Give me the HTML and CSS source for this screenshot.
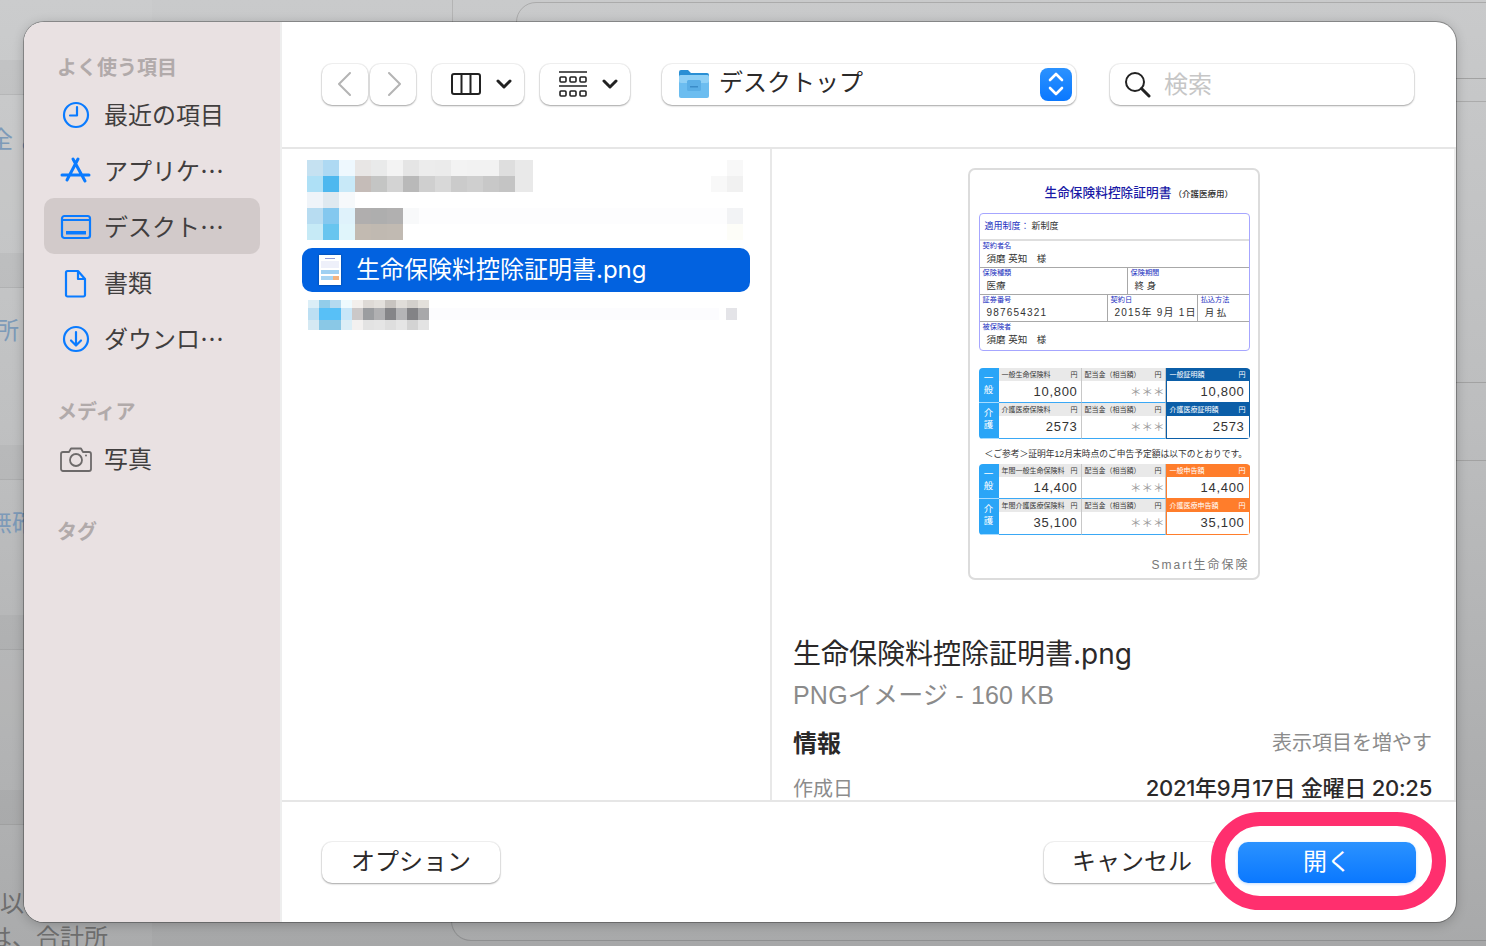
FILE: index.html
```html
<!DOCTYPE html>
<html lang="ja">
<head>
    <meta charset="UTF-8">
    <title>ファイルを開く</title>
    <link rel="stylesheet" href="styles.css">
</head>
<body>
<div class="screen">
    <!-- page behind the sheet -->
    <div class="back-col"></div>
    <div class="back-top"></div>
    <div class="back-window"></div>
    <div class="back-lower"></div>
    <div class="back-band band-1"></div>
    <div class="back-band band-2"></div>
    <div class="back-band band-3"></div>
    <div class="back-band band-4"></div>
    <div class="back-band band-5"></div>
    <div class="back-line line-1"></div>
    <div class="back-line line-2"></div>
    <div class="back-line line-3"></div>
    <span class="back-text text-1">全 よ</span>
    <span class="back-text text-2">所</span>
    <span class="back-text text-3">無確</span>
    <span class="back-text text-4">以</span>
    <span class="back-text text-5">は、合計所</span>

    <div class="dialog">
        <aside class="sidebar">
            <div class="side-head">よく使う項目</div>
            <div class="side-item">
                <svg class="side-icon" viewBox="0 0 32 32"><circle cx="16" cy="16" r="12"/><path d="M17 8v8.500h-7"/></svg>
                <span>最近の項目</span>
            </div>
            <div class="side-item">
                <svg class="side-icon" viewBox="0 0 32 32"><path class="thick" d="M13 4l12 22M18 4L7 25M2 20h27"/></svg>
                <span>アプリケ…</span>
            </div>
            <div class="side-item selected">
                <svg class="side-icon" viewBox="0 0 32 32"><rect x="2" y="5" width="28" height="22" rx="2.500"/><path d="M2 9h28"/><rect class="solid" x="6" y="20" width="20" height="3.500"/></svg>
                <span>デスクト…</span>
            </div>
            <div class="side-item">
                <svg class="side-icon" viewBox="0 0 32 32"><path d="M7.500 4H18l7 8v16a1.500 1.500 0 0 1-1.500 1.500h-16A1.500 1.500 0 0 1 6 28V5.500A1.500 1.500 0 0 1 7.500 4zM18 4v8h7"/></svg>
                <span>書類</span>
            </div>
            <div class="side-item">
                <svg class="side-icon" viewBox="0 0 32 32"><circle cx="16" cy="16" r="12"/><path d="M16 9v13M11 17.500l5 5 5-5"/></svg>
                <span>ダウンロ…</span>
            </div>
            <div class="side-head second">メディア</div>
            <div class="side-item">
                <svg class="side-icon gray" viewBox="0 0 32 32"><path d="M3 9h6l2-3.500h10L23 9h6a2 2 0 0 1 2 2v15a2 2 0 0 1-2 2H3a2 2 0 0 1-2-2V11a2 2 0 0 1 2-2z"/><circle cx="16" cy="17" r="6"/><circle class="solid" cx="26" cy="12.500" r="1"/></svg>
                <span>写真</span>
            </div>
            <div class="side-head second">タグ</div>
        </aside>

        <div class="content">
            <div class="toolbar">
                <div class="nav-group">
                    <button class="tool-btn nav-btn back"><svg width="14" height="24" viewBox="0 0 14 24"><path d="M13 1L2 12l11 11"/></svg></button>
                    <button class="tool-btn nav-btn fwd"><svg width="14" height="24" viewBox="0 0 14 24"><path d="M1 1l11 11L1 23"/></svg></button>
                </div>
                <button class="tool-btn view-btn">
                    <svg class="dark" width="32" height="24" viewBox="0 0 32 24"><rect x="2" y="2" width="28" height="20" rx="2"/><path d="M11.500 2v20M20.500 2v20"/></svg>
                    <svg class="chev" width="16" height="10" viewBox="0 0 16 10"><path d="M2 2l6 6 6-6"/></svg>
                </button>
                <button class="tool-btn group-btn">
                    <svg class="dark thin" width="28" height="27" viewBox="0 0 28 27"><path d="M0 1h28M0 15h28"/><rect x="1" y="6" width="6" height="5" rx="1"/><rect x="11" y="6" width="6" height="5" rx="1"/><rect x="21" y="6" width="6" height="5" rx="1"/><rect x="1" y="20" width="6" height="5" rx="1"/><rect x="11" y="20" width="6" height="5" rx="1"/><rect x="21" y="20" width="6" height="5" rx="1"/></svg>
                    <svg class="chev" width="16" height="10" viewBox="0 0 16 10"><path d="M2 2l6 6 6-6"/></svg>
                </button>
                <div class="tool-btn path-btn">
                    <svg class="folder" width="30" height="28" viewBox="0 0 30 28">
                        <path fill="#2a8fd4" d="M0 2a2 2 0 0 1 2-2h7l3 3h16a2 2 0 0 1 2 2v6H0z"/>
                        <rect fill="#6cbdf0" y="5" width="30" height="23" rx="2"/>
                        <rect fill="#8fd0f6" y="5" width="30" height="8" rx="2"/>
                        <rect fill="#5aaee6" x="8" y="10" width="14" height="11" rx="1.500"/>
                        <rect fill="#3b8cc8" x="11" y="16" width="8" height="1.500"/>
                    </svg>
                    <span class="path-name">デスクトップ</span>
                    <span class="stepper">
                        <svg width="18" height="26" viewBox="0 0 18 26"><path d="M3 9l6-6 6 6M3 17l6 6 6-6"/></svg>
                    </span>
                </div>
                <div class="tool-btn search-box">
                    <svg class="dark" width="27" height="27" viewBox="0 0 27 27"><circle cx="11" cy="11" r="9"/><path class="thick" d="M17.500 17.500l7.500 7.500"/></svg>
                    <span class="placeholder">検索</span>
                </div>
            </div>

            <div class="browser">
                <div class="file-list">
                    <svg class="mosaic" width="436" height="80" shape-rendering="crispEdges">
                        <rect x="0" y="0" width="16" height="16" fill="#c5e1f1"/><rect x="16" y="0" width="16" height="16" fill="#aed9f3"/><rect x="32" y="0" width="16" height="16" fill="#eef8fe"/><rect x="48" y="0" width="16" height="16" fill="#e8e6e5"/><rect x="64" y="0" width="16" height="16" fill="#e9eaea"/><rect x="80" y="0" width="16" height="16" fill="#f3f3f3"/><rect x="96" y="0" width="16" height="16" fill="#e5e5e5"/><rect x="112" y="0" width="16" height="16" fill="#ececec"/><rect x="128" y="0" width="16" height="16" fill="#ebebeb"/><rect x="144" y="0" width="16" height="16" fill="#f3f3f3"/><rect x="160" y="0" width="32" height="16" fill="#f2f2f2"/><rect x="192" y="0" width="16" height="16" fill="#dedede"/><rect x="208" y="0" width="18" height="16" fill="#e9e9e9"/><rect x="420" y="0" width="16" height="16" fill="#f8f8f8"/>
                        <rect x="0" y="16" width="16" height="16" fill="#aee0f6"/><rect x="16" y="16" width="16" height="16" fill="#4db8ef"/><rect x="32" y="16" width="16" height="16" fill="#c8e9f8"/><rect x="48" y="16" width="16" height="16" fill="#c5bcb8"/><rect x="64" y="16" width="16" height="16" fill="#c4c5c4"/><rect x="80" y="16" width="16" height="16" fill="#d3d3d3"/><rect x="96" y="16" width="16" height="16" fill="#b9b9b9"/><rect x="112" y="16" width="16" height="16" fill="#cfcfcf"/><rect x="128" y="16" width="16" height="16" fill="#d8d8d8"/><rect x="144" y="16" width="16" height="16" fill="#cbcbcb"/><rect x="160" y="16" width="16" height="16" fill="#cfcfcf"/><rect x="176" y="16" width="16" height="16" fill="#c8c8c8"/><rect x="192" y="16" width="16" height="16" fill="#c4c4c4"/><rect x="208" y="16" width="18" height="16" fill="#e9e9e9"/><rect x="404" y="16" width="16" height="16" fill="#f8f8f8"/><rect x="420" y="16" width="16" height="16" fill="#f1f1f1"/>
                        <rect x="0" y="32" width="16" height="16" fill="#eff4f9"/><rect x="16" y="32" width="16" height="16" fill="#dfe9f0"/><rect x="32" y="32" width="16" height="16" fill="#f6f9fb"/>
                        <rect x="0" y="48" width="16" height="16" fill="#b7dcf1"/><rect x="16" y="48" width="16" height="16" fill="#84c8ef"/><rect x="32" y="48" width="16" height="16" fill="#dff2fb"/><rect x="48" y="48" width="16" height="16" fill="#b0aeae"/><rect x="64" y="48" width="16" height="16" fill="#aeaeae"/><rect x="80" y="48" width="16" height="16" fill="#b1b0b0"/><rect x="96" y="48" width="16" height="16" fill="#f8f9fa"/><rect x="112" y="48" width="308" height="16" fill="#fdfdfe"/><rect x="420" y="48" width="16" height="16" fill="#f2f3f5"/>
                        <rect x="0" y="64" width="16" height="16" fill="#c6eaf6"/><rect x="16" y="64" width="16" height="16" fill="#68c5ef"/><rect x="32" y="64" width="16" height="16" fill="#e0f5fb"/><rect x="48" y="64" width="16" height="16" fill="#c2bab1"/><rect x="64" y="64" width="16" height="16" fill="#c0b9b1"/><rect x="80" y="64" width="16" height="16" fill="#c1bab2"/><rect x="420" y="64" width="16" height="16" fill="#fdfdf8"/>
                    </svg>
                    <div class="file-row">
                        <svg class="file-thumb" width="22" height="30" viewBox="0 0 22 30">
                            <rect width="22" height="30" fill="#fff"/>
                            <rect x="6" y="3" width="10" height="1" fill="#8f9bd8"/>
                            <rect x="2" y="6" width="18" height="7" fill="#eef0fa"/>
                            <rect x="2" y="15" width="18" height="4" fill="#9fd0f2"/>
                            <rect x="2" y="21" width="18" height="4" fill="#a8d4f2"/>
                            <rect x="14" y="21" width="6" height="4" fill="#f3b27e"/>
                        </svg>
                        <span class="file-name">生命保険料控除証明書.png</span>
                    </div>
                    <svg class="mosaic" width="436" height="30" shape-rendering="crispEdges">
                        <rect x="1" y="0" width="11" height="8" fill="#dbeef7"/><rect x="12" y="0" width="11" height="8" fill="#92cdea"/><rect x="23" y="0" width="11" height="8" fill="#b5daf0"/><rect x="34" y="0" width="11" height="8" fill="#eefafe"/><rect x="45" y="0" width="11" height="8" fill="#f2efec"/><rect x="56" y="0" width="11" height="8" fill="#dedad6"/><rect x="67" y="0" width="11" height="8" fill="#e3e0dc"/><rect x="78" y="0" width="11" height="8" fill="#c8c4c0"/><rect x="89" y="0" width="11" height="8" fill="#e0ddd9"/><rect x="100" y="0" width="11" height="8" fill="#d3d0cc"/><rect x="111" y="0" width="11" height="8" fill="#e3e0db"/>
                        <rect x="1" y="8" width="11" height="12" fill="#bcdff3"/><rect x="12" y="8" width="22" height="12" fill="#58c0f7"/><rect x="34" y="8" width="11" height="12" fill="#c8e6f8"/><rect x="45" y="8" width="11" height="12" fill="#cbc8c8"/><rect x="56" y="8" width="11" height="12" fill="#9b9da0"/><rect x="67" y="8" width="11" height="12" fill="#b0b0b2"/><rect x="78" y="8" width="11" height="12" fill="#858588"/><rect x="89" y="8" width="11" height="12" fill="#b4b4b6"/><rect x="100" y="8" width="11" height="12" fill="#838386"/><rect x="111" y="8" width="11" height="12" fill="#a8a8aa"/><rect x="122" y="8" width="290" height="12" fill="#fcfcfe"/><rect x="419" y="8" width="11" height="12" fill="#e4e4e8"/>
                        <rect x="1" y="20" width="11" height="10" fill="#d5e9f3"/><rect x="12" y="20" width="22" height="10" fill="#8ac8e6"/><rect x="34" y="20" width="11" height="10" fill="#dceef6"/><rect x="45" y="20" width="11" height="10" fill="#f3f1f0"/><rect x="56" y="20" width="11" height="10" fill="#e3e3e3"/><rect x="67" y="20" width="11" height="10" fill="#e5e5e5"/><rect x="78" y="20" width="11" height="10" fill="#dedede"/><rect x="89" y="20" width="11" height="10" fill="#e5e5e5"/><rect x="100" y="20" width="11" height="10" fill="#d3d3d3"/><rect x="111" y="20" width="11" height="10" fill="#e3e3e3"/>
                    </svg>
                </div>

                <div class="preview">
                    <div class="doc">
                        <div class="doc-title">生命保険料控除証明書<small>（介護医療用）</small></div>
                        <div class="doc-box">
                            <div class="doc-row plan"><b>適用制度：</b>新制度</div>
                            <div class="doc-row">
                                <div class="doc-field"><label>契約者名</label><p>須磨 英知　様</p></div>
                            </div>
                            <div class="doc-row split-a">
                                <div class="doc-field"><label>保険種類</label><p>医療</p></div>
                                <div class="doc-field"><label>保険期間</label><p>終 身</p></div>
                            </div>
                            <div class="doc-row split-b">
                                <div class="doc-field"><label>証券番号</label><p class="wide">987654321</p></div>
                                <div class="doc-field"><label>契約日</label><p class="wide">2015年 9月 1日</p></div>
                                <div class="doc-field"><label>払込方法</label><p>月 払</p></div>
                            </div>
                            <div class="doc-row">
                                <div class="doc-field"><label>被保険者</label><p>須磨 英知　様</p></div>
                            </div>
                        </div>

                        <div class="doc-table navy">
                            <div class="tbl-side">一<br>般</div>
                            <div class="tbl-cell"><div class="tbl-head"><span>一般生命保険料</span><span>円</span></div><div class="tbl-val">10,800</div></div>
                            <div class="tbl-cell"><div class="tbl-head"><span>配当金（相当額）</span><span>円</span></div><div class="tbl-val stars">＊＊＊</div></div>
                            <div class="tbl-cell total"><div class="tbl-head"><span>一般証明額</span><span>円</span></div><div class="tbl-val">10,800</div></div>
                            <div class="tbl-side">介<br>護</div>
                            <div class="tbl-cell"><div class="tbl-head"><span>介護医療保険料</span><span>円</span></div><div class="tbl-val">2573</div></div>
                            <div class="tbl-cell"><div class="tbl-head"><span>配当金（相当額）</span><span>円</span></div><div class="tbl-val stars">＊＊＊</div></div>
                            <div class="tbl-cell total"><div class="tbl-head"><span>介護医療証明額</span><span>円</span></div><div class="tbl-val">2573</div></div>
                        </div>

                        <div class="doc-note">＜ご参考＞証明年12月末時点のご申告予定額は以下のとおりです。</div>

                        <div class="doc-table orange">
                            <div class="tbl-side">一<br>般</div>
                            <div class="tbl-cell"><div class="tbl-head"><span>年間一般生命保険料</span><span>円</span></div><div class="tbl-val">14,400</div></div>
                            <div class="tbl-cell"><div class="tbl-head"><span>配当金（相当額）</span><span>円</span></div><div class="tbl-val stars">＊＊＊</div></div>
                            <div class="tbl-cell total"><div class="tbl-head"><span>一般申告額</span><span>円</span></div><div class="tbl-val">14,400</div></div>
                            <div class="tbl-side">介<br>護</div>
                            <div class="tbl-cell"><div class="tbl-head"><span>年間介護医療保険料</span><span>円</span></div><div class="tbl-val">35,100</div></div>
                            <div class="tbl-cell"><div class="tbl-head"><span>配当金（相当額）</span><span>円</span></div><div class="tbl-val stars">＊＊＊</div></div>
                            <div class="tbl-cell total"><div class="tbl-head"><span>介護医療申告額</span><span>円</span></div><div class="tbl-val">35,100</div></div>
                        </div>

                        <div class="doc-brand">Smart生命保険</div>
                    </div>

                    <div class="info">
                        <div class="info-name">生命保険料控除証明書.png</div>
                        <div class="info-kind">PNGイメージ - 160 KB</div>
                        <div class="info-row head">
                            <strong>情報</strong>
                            <span class="more">表示項目を増やす</span>
                        </div>
                        <div class="info-row date">
                            <span class="key">作成日</span>
                            <span class="value">2021年9月17日 金曜日 20:25</span>
                        </div>
                    </div>
                </div>
            </div>

            <div class="footer">
                <button class="foot-btn option-btn">オプション</button>
                <div class="foot-right">
                    <button class="foot-btn cancel-btn">キャンセル</button>
                    <div class="open-wrap">
                        <button class="foot-btn open-btn">開く</button>
                        <div class="ring"></div>
                    </div>
                </div>
            </div>
        </div>
    </div>
</div>
</body>
</html>
```

FILE: styles.css
```css
* {
    box-sizing: border-box;
}
html, body {
    margin: 0;
    height: 100%;
    overflow: hidden;
}
body {
    font-family: "Liberation Sans", "Noto Sans CJK JP", sans-serif;
    color: #2c2a2a;
}
button {
    font: inherit;
    border: none;
    padding: 0;
    margin: 0;
}
svg {
    display: block;
    flex: none;
}

/* page behind the dialog */
.screen {
    position: relative;
    width: 1486px;
    height: 946px;
    overflow: hidden;
    padding: 22px 0 0 24px;
    background: linear-gradient(180deg, #c9cacb 0%, #bcbdbe 45%, #a6a7a8 100%);
}
.back-col {
    position: absolute;
    left: 0;
    top: 0;
    width: 152px;
    height: 946px;
    background: rgba(255, 255, 255, 0.05);
}
.back-top {
    position: absolute;
    left: 452px;
    top: 0;
    width: 1034px;
    height: 22px;
    border-left: 1px solid #b4b4b4;
}
.back-window {
    position: absolute;
    left: 516px;
    top: 2px;
    width: 1000px;
    height: 100px;
    border: 1px solid #ababab;
    border-radius: 20px;
}
.back-lower {
    position: absolute;
    left: 451px;
    top: 800px;
    width: 1100px;
    height: 141px;
    border: 1px solid #8f9091;
    border-top: none;
    border-radius: 0 0 0 20px;
    background: rgba(255, 255, 255, 0.03);
}
.back-band {
    position: absolute;
    left: 0;
    width: 30px;
    height: 35px;
    background: rgba(0, 0, 0, 0.03);
    border-bottom: 1px solid rgba(0, 0, 0, 0.06);
}
.band-1 { top: 60px; }
.band-2 { top: 253px; }
.band-3 { top: 445px; }
.band-4 { top: 615px; }
.band-5 { top: 790px; }
.back-line {
    position: absolute;
    left: 1456px;
    width: 30px;
    height: 1px;
    background: #a2a2a2;
}
.line-1 { top: 78px; }
.line-2 { top: 382px; }
.line-3 { top: 460px; }
.back-text {
    position: absolute;
    font-size: 24px;
    line-height: 30px;
    color: #7d9ab8;
    white-space: nowrap;
}
.text-1 { left: -11px; top: 125px; }
.text-2 { left: -5px; top: 316px; }
.text-3 { left: -12px; top: 508px; }
.text-4 { left: 0; top: 889px; color: #6e6e6e; }
.text-5 { left: -12px; top: 923px; color: #6e6e6e; }

/* dialog */
.dialog {
    position: relative;
    display: flex;
    width: 1432px;
    height: 900px;
    background: #fff;
    border-radius: 20px;
    overflow: hidden;
    box-shadow: 0 0 0 1px rgba(0, 0, 0, 0.28), 0 2px 12px rgba(0, 0, 0, 0.22);
}
.sidebar {
    width: 258px;
    flex: none;
    padding: 28px 20px 0;
    background: #e9e1e2;
    border-right: 2px solid #eeeeee;
}
.side-head {
    height: 36px;
    line-height: 36px;
    font-size: 20px;
    font-weight: 700;
    color: #b1aaaa;
    padding-left: 13px;
}
.side-head.second {
    margin-top: 28px;
}
.side-item {
    display: flex;
    align-items: center;
    gap: 13px;
    height: 56px;
    padding-left: 16px;
    font-family: "Noto Sans CJK JP", sans-serif;
    font-size: 24px;
    color: #413e3e;
    border-radius: 10px;
}
.side-item span {
    margin: -2px 0 0 -1px;
}
.side-item.selected {
    background: #d2caca;
}
.side-icon {
    width: 32px;
    height: 32px;
    margin-top: 2px;
    fill: none;
    stroke: #0a7bff;
    stroke-width: 2.200;
    stroke-linecap: round;
    stroke-linejoin: round;
}
.side-icon.gray {
    stroke: #6d6a6a;
    stroke-width: 1.800;
}
.side-icon .solid {
    fill: currentColor;
    color: #0a7bff;
    stroke: none;
}
.side-icon.gray .solid {
    color: #6d6a6a;
}
.side-icon .thick {
    stroke-width: 3;
}

.content {
    flex: 1;
    min-width: 0;
    display: flex;
    flex-direction: column;
}

/* toolbar */
.toolbar {
    height: 127px;
    flex: none;
    display: flex;
    align-items: center;
    padding: 0 40px 1px;
    border-bottom: 2px solid #e6e6e6;
}
.tool-btn {
    display: flex;
    align-items: center;
    height: 41px;
    background: #fff;
    border-radius: 10px;
    box-shadow: 0 0 0 1px rgba(0, 0, 0, 0.05), 0 1px 2px rgba(0, 0, 0, 0.32);
}
.nav-group {
    display: flex;
    gap: 2px;
    margin-right: 16px;
}
.nav-btn {
    width: 46px;
    justify-content: center;
}
.nav-btn.back svg {
    margin-right: 3px;
}
.nav-btn.fwd svg {
    margin-left: 3px;
}
.nav-btn svg {
    fill: none;
    stroke: #b4b4b4;
    stroke-width: 2;
    stroke-linecap: round;
    stroke-linejoin: round;
}
.dark {
    fill: none;
    stroke: #222;
    stroke-width: 2;
}
.dark.thin {
    stroke-width: 1.600;
}
.dark .thick {
    stroke-width: 3;
    stroke-linecap: round;
}
.chev {
    fill: none;
    stroke: #222;
    stroke-width: 3;
    stroke-linecap: round;
    stroke-linejoin: round;
}
.view-btn {
    width: 92px;
    padding-left: 18px;
    gap: 14px;
    margin-right: 16px;
}
.group-btn {
    width: 90px;
    padding-left: 19px;
    gap: 15px;
    margin-right: 32px;
}
.path-btn {
    width: 414px;
    padding: 0 4px 0 17px;
}
.path-name {
    flex: 1;
    margin: -2px 0 0 10px;
    font-size: 24px;
    color: #2b2929;
    line-height: 36px;
}
.stepper {
    width: 32px;
    height: 33px;
    display: flex;
    align-items: center;
    justify-content: center;
    border-radius: 8px;
    background: linear-gradient(180deg, #2b92ff, #0a78ff);
}
.stepper svg {
    fill: none;
    stroke: #fff;
    stroke-width: 2.600;
    stroke-linecap: round;
    stroke-linejoin: round;
}
.search-box {
    width: 304px;
    margin-left: 34px;
    padding-left: 14px;
    gap: 13px;
}
.placeholder {
    margin-top: -4px;
    font-size: 24px;
    color: #c6c6c6;
}

/* file browser */
.browser {
    flex: 1;
    min-height: 0;
    display: flex;
    overflow: hidden;
    border-right: 2px solid #eeeeee;
}
.file-list {
    width: 490px;
    flex: none;
    padding: 11px 20px 0;
    border-right: 2px solid #e8e8e8;
}
.mosaic {
    margin-left: 5px;
}
.file-row {
    display: flex;
    align-items: center;
    gap: 15px;
    height: 44px;
    margin: 8px 0;
    padding-left: 17px;
    font-size: 24px;
    color: #fff;
    background: #0262e0;
    border-radius: 10px;
}
.file-name {
    margin-top: -6px;
    font-family: Inter, "Noto Sans CJK JP", sans-serif;
}
.file-thumb {
    box-shadow: 0 0 2px rgba(0, 0, 0, 0.4);
}

/* preview */
.preview {
    flex: 1;
    min-width: 0;
    padding: 19px 0 0 1px;
}
.doc {
    width: 292px;
    height: 412px;
    margin: 0 auto;
    padding: 1px 7px 0 9px;
    border: 2px solid #dcdcdc;
    border-radius: 7px;
    background: #fff;
    color: #333;
}
.doc-title {
    height: 42px;
    padding: 2px 0 0 66px;
    line-height: 40px;
    font-size: 12.700px;
    font-weight: 500;
    color: #1a1aa6;
    white-space: nowrap;
}
.doc-title small {
    font-size: 8.500px;
    color: #333;
    margin-left: 2px;
}
.doc-box {
    width: 271px;
    height: 138px;
    border: 1px solid #a6a6ff;
    border-radius: 4px;
    margin-bottom: 17px;
    overflow: hidden;
}
.doc-row {
    height: 27px;
    display: flex;
    border-bottom: 1px solid #a8a8a8;
}
.doc-row:last-child {
    border-bottom: none;
}
.doc-row.plan {
    align-items: center;
    padding: 0 0 3px 5px;
    font-size: 9px;
    border-bottom: 2px solid #dedede;
}
.doc-row.plan b {
    font-weight: 400;
    color: #2330c0;
    margin-right: 2px;
}
.doc-field {
    flex: 1;
    padding-left: 3px;
    border-left: 1px solid #a8a8a8;
}
.doc-field:first-child {
    border-left: none;
}
.doc-field label {
    display: block;
    height: 10px;
    font-size: 7.200px;
    line-height: 10px;
    color: #2330c0;
}
.doc-field p {
    margin: 0;
    height: 15px;
    line-height: 15px;
    font-size: 9.500px;
    padding-left: 4px;
    white-space: nowrap;
}
.doc-field p.wide {
    font-size: 10px;
    letter-spacing: 1.200px;
}
.split-a .doc-field:first-child {
    flex: 0 0 147px;
}
.split-b .doc-field:nth-child(1) {
    flex: 0 0 127px;
}
.split-b .doc-field:nth-child(2) {
    flex: 0 0 89px;
}
.doc-table {
    display: grid;
    grid-template-columns: 20px 83px 84px 84px;
    grid-template-rows: 35px 36px;
    width: 271px;
    height: 71px;
    border-radius: 4px;
    overflow: hidden;
    --accent: #0b5ea8;
}
.doc-table.orange {
    --accent: #ff7d2b;
}
.tbl-side {
    font-size: 9.500px;
    line-height: 12px;
    color: #fff;
    background: #2aa5f7;
    border-bottom: 1px solid #a8dcff;
    text-align: center;
    padding-top: 4px;
}
.tbl-cell {
    display: flex;
    flex-direction: column;
    min-width: 0;
    border-right: 1px solid #c8c8c8;
    border-bottom: 1px solid #3aa8f5;
}
.tbl-head {
    flex: none;
    display: flex;
    justify-content: space-between;
    height: 13px;
    padding: 0 3px;
    font-size: 7px;
    line-height: 13px;
    background: #e9e9e9;
    color: #3a3a3a;
    white-space: nowrap;
    overflow: hidden;
}
.tbl-val {
    flex: 1;
    min-height: 0;
    text-align: right;
    padding-right: 3px;
    font-size: 13px;
    line-height: 22px;
    letter-spacing: 0.700px;
    color: #333;
}
.tbl-val.stars {
    font-size: 11.500px;
    letter-spacing: 0;
    color: #999;
    padding-right: 0;
}
.tbl-cell.total {
    border: 1px solid var(--accent);
    border-top: none;
}
.tbl-cell.total .tbl-val {
    padding-right: 4px;
}
.tbl-cell.total .tbl-head {
    background: var(--accent);
    color: #fff;
    margin: 0 -1px;
    padding: 0 4px;
}
.doc-note {
    height: 25px;
    padding: 4px 0 0 6px;
    line-height: 22px;
    font-size: 8.750px;
    color: #333;
    white-space: nowrap;
}
.doc-brand {
    margin-top: 21px;
    width: 271px;
    text-align: right;
    font-size: 12px;
    line-height: 18px;
    letter-spacing: 2px;
    color: #777;
}
.info {
    padding: 0 22px 0 20px;
    margin-top: 56px;
}
.info-name {
    height: 36px;
    line-height: 36px;
    font-family: Inter, "Noto Sans CJK JP", sans-serif;
    font-size: 28px;
    color: #2b2929;
    white-space: nowrap;
}
.info-kind {
    height: 36px;
    margin-top: 5px;
    line-height: 36px;
    font-size: 25px;
    letter-spacing: 0.200px;
    color: #8b8b8b;
}
.info-row {
    display: flex;
    justify-content: space-between;
    align-items: center;
}
.info-row.head {
    height: 34px;
    margin-top: 11px;
}
.info-row.head strong {
    font-size: 24px;
    font-weight: 700;
    color: #2b2929;
}
.more {
    font-size: 20px;
    color: #8c8c8c;
}
.info-row.date {
    height: 32px;
    margin-top: 13px;
}
.key {
    font-size: 20px;
    color: #8c8c8c;
}
.value {
    margin-top: -2px;
    font-family: Inter, "Noto Sans CJK JP", sans-serif;
    font-size: 22px;
    font-weight: 500;
    letter-spacing: -0.250px;
    color: #2b2929;
}

/* bottom buttons */
.footer {
    height: 122px;
    flex: none;
    display: flex;
    justify-content: space-between;
    align-items: center;
    padding: 0 40px;
    border-top: 2px solid #e6e6e6;
}
.foot-right {
    display: flex;
    gap: 18px;
}
.foot-btn {
    display: block;
    height: 41px;
    padding-bottom: 2px;
    font-size: 24px;
    line-height: 37px;
    text-align: center;
    border-radius: 10px;
    background: #fff;
    color: #2b2929;
    box-shadow: 0 0 0 1px rgba(0, 0, 0, 0.05), 0 1px 2px rgba(0, 0, 0, 0.32);
}
.option-btn {
    width: 178px;
}
.cancel-btn {
    width: 176px;
}
.open-wrap {
    position: relative;
}
.open-btn {
    width: 178px;
    color: #fff;
    background: linear-gradient(180deg, #2b92ff, #0a78ff);
    box-shadow: 0 1px 3px rgba(10, 120, 255, 0.25);
}
.ring {
    position: absolute;
    left: -27px;
    top: -30px;
    width: 235px;
    height: 98px;
    border: 14px solid #ff2f6e;
    border-radius: 49px;
}
```
